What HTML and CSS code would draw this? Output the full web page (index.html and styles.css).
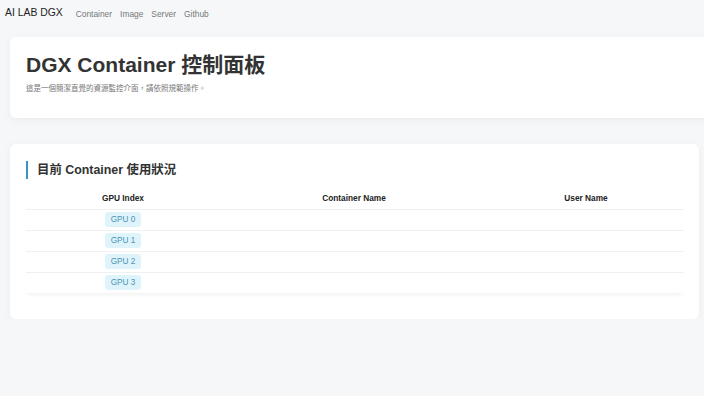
FILE: index.html
```html
<!DOCTYPE html>
<html lang="zh-Hant">
<head>
<meta charset="utf-8">
<title>AI LAB DGX</title>
<link rel="stylesheet" href="styles.css">
</head>
<body>
<nav class="navbar">
  <a class="brand" href="#">AI LAB DGX</a>
  <ul class="nav-links">
    <li><a href="#">Container</a></li>
    <li><a href="#">Image</a></li>
    <li><a href="#">Server</a></li>
    <li><a href="#">Github</a></li>
  </ul>
</nav>
<main class="main">
  <section class="hero">
    <h1 class="hero-title">DGX Container 控制面板</h1>
    <p class="hero-sub">這是一個簡潔直覺的資源監控介面，請依照規範操作。</p>
  </section>
  <section class="panel">
    <h2 class="panel-title">目前 Container 使用狀況</h2>
    <table class="gpu-table">
      <thead>
        <tr><th class="col-gpu">GPU Index</th><th class="col-container">Container Name</th><th class="col-user">User Name</th></tr>
      </thead>
      <tbody>
        <tr><td><span class="badge">GPU 0</span></td><td></td><td></td></tr>
        <tr><td><span class="badge">GPU 1</span></td><td></td><td></td></tr>
        <tr><td><span class="badge">GPU 2</span></td><td></td><td></td></tr>
        <tr><td><span class="badge">GPU 3</span></td><td></td><td></td></tr>
      </tbody>
    </table>
  </section>
</main>
</body>
</html>
```
FILE: styles.css
```css
* { box-sizing: border-box; }
html, body { margin: 0; padding: 0; }
body {
  background: #f6f7f9;
  font-family: "Liberation Sans", Arial, "Noto Sans CJK TC", sans-serif;
  color: #333;
  overflow: hidden;
}
.navbar {
  display: flex;
  align-items: center;
  height: 24px;
  padding: 0 5px;
}
.brand {
  font-size: 10.4px;
  color: #222;
  text-decoration: none;
  margin-right: 13px;
}
.nav-links {
  display: flex;
  gap: 8px;
  list-style: none;
  margin: 0;
  padding: 0;
}
.nav-links a {
  font-size: 8.4px;
  color: #777;
  text-decoration: none;
}
.main {
  padding: 13px 5px 0 10px;
}
.hero {
  background: #fff;
  margin-right: -20px;
  padding: 15px 16px 25px;
  border-radius: 6px;
  box-shadow: 0 2px 8px rgba(0,0,0,0.05);
}
.hero-title {
  margin: 0;
  font-size: 21px;
  font-weight: 700;
  color: #333;
  line-height: 26px;
}
.hero-sub {
  margin: 4px 0 0;
  font-size: 7.5px;
  color: #777;
}
.panel {
  margin-top: 26px;
  background: #fff;
  border-radius: 6px;
  padding: 17px 15px 26px 16px;
  box-shadow: 0 2px 8px rgba(0,0,0,0.05);
}
.panel-title {
  margin: 0;
  font-size: 12.4px;
  font-weight: 700;
  color: #333;
  border-left: 2px solid #3d92c4;
  padding-left: 9px;
  line-height: 18px;
}
.gpu-table {
  margin-top: 9px;
  width: 100%;
  border-collapse: collapse;
  box-shadow: 0 4px 4px -2px rgba(0,0,0,0.06);
  font-size: 8px;
}
.gpu-table th {
  font-size: 8.3px;
  font-weight: 700;
  color: #222;
  height: 21px;
  border-bottom: 1px solid #eef0f2;
  text-align: center;
}
.col-gpu { width: 194px; }
.col-container { width: 268px; }
.gpu-table td {
  height: 21px;
  border-bottom: 1px solid #eef0f2;
  text-align: center;
}
.gpu-table tbody tr:last-child td { border-bottom: none; }
.badge {
  display: inline-block;
  background: #dff3fb;
  color: #4a93b6;
  font-size: 8.2px;
  padding: 3px 6px;
  border-radius: 3px;
  line-height: 9px;
}
```
